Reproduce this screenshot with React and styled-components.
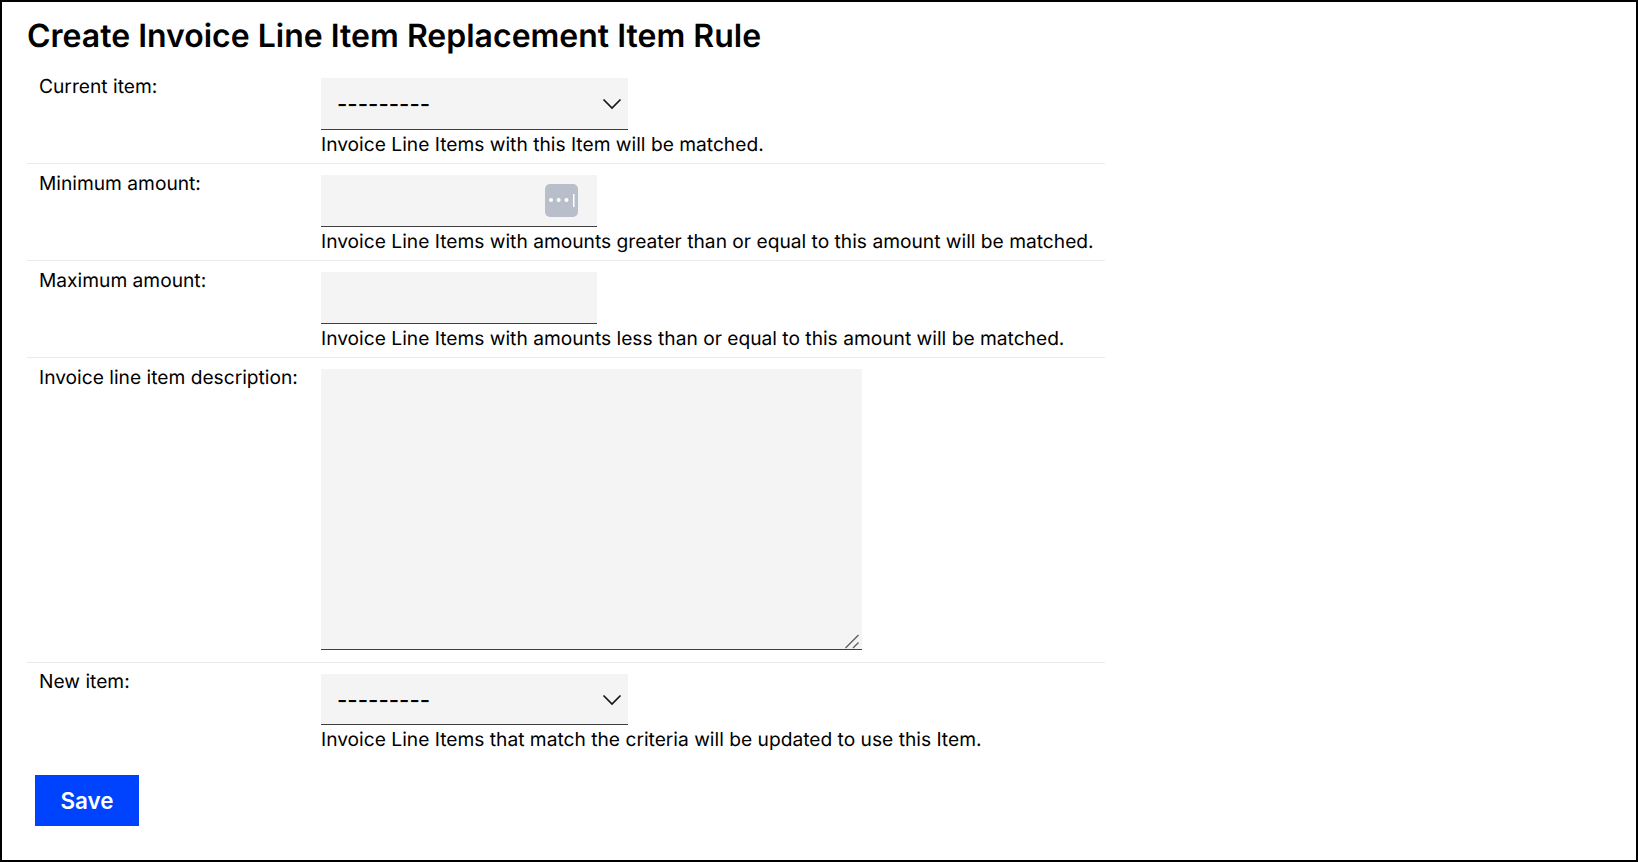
import React from "react";
import styled, { createGlobalStyle } from "styled-components";

const Global = createGlobalStyle`
  html, body { margin: 0; padding: 0; background: #fff; }
  * { box-sizing: border-box; }
`;
const Frame = styled.div`
  width: 1638px;
  height: 862px;
  border: 2px solid #000;
  padding: 13px 25px 0;
  font-family: Inter, "Liberation Sans", sans-serif;
  color: #000;
  overflow: hidden;
  text-rendering: geometricPrecision;
`;
const Title = styled.h1`
  margin: 0 0 10px;
  font-size: 32px;
  line-height: 42px;
  font-weight: 600;
`;
const Form = styled.form`
  width: 1078px;
  display: flex;
  flex-direction: column;
`;
const Row = styled.div`
  display: grid;
  grid-template-columns: 294px 1fr;
  padding: 10.9px 0 3.8px;
  border-bottom: ${(p) => (p.$last ? "none" : "1px solid #ebebeb")};
  &:first-child { padding-bottom: 4.7px; }
`;
const Label = styled.label`
  padding-left: 12px;
  margin-top: ${(p) => p.$nudge || 0}px;
  font-size: 19.2px;
  line-height: 16px;
`;
const Field = styled.div`
  display: flex;
  flex-direction: column;
  align-items: flex-start;
`;
const Control = styled.div`
  position: relative;
  width: ${(p) => p.$w}px;
  margin-bottom: ${(p) => p.$gap || 0}px;
`;
const baseInput = `
  display: block;
  width: 100%;
  background: #f4f4f4;
  border: none;
  border-bottom: 1px solid #3f3f3f;
  border-radius: 0;
  outline: none;
  color: #000;
  font-family: inherit;
  font-size: 19.2px;
`;
const Select = styled.select`
  ${baseInput}
  height: ${(p) => p.$h || 51.9}px;
  padding: 0 16px;
  font-size: 22.4px;
  font-weight: 500;
  appearance: none;
`;
const Input = styled.input`
  ${baseInput}
  height: 51.9px;
  padding: 0 16px;
`;
const Area = styled.textarea`
  ${baseInput}
  height: 281.9px;
  padding: 16px;
  resize: none;
`;
const Chevron = styled.svg`
  position: absolute;
  right: 5px;
  top: 17px;
  pointer-events: none;
`;
const KeyChip = styled.svg`
  position: absolute;
  left: 224px;
  top: 9px;
`;
const Grip = styled.svg`
  position: absolute;
  right: 2px;
  bottom: 1px;
  pointer-events: none;
`;
const Help = styled.div`
  font-size: 19.2px;
  line-height: 29px;
  white-space: nowrap;
`;
const Save = styled.button`
  display: block;
  margin: 16.8px 0 0 8px;
  width: 104px;
  height: 51px;
  border: none;
  background: #0043ff;
  color: #fff;
  font-family: inherit;
  font-size: 22.4px;
  font-weight: 600;
`;

const Arrow = () => (
  <Chevron width="22" height="18" viewBox="0 0 22 18" fill="none">
    <path d="M2.5 4.5 L11 13 L19.5 4.5" stroke="#161616" strokeWidth="1.7" />
  </Chevron>
);
const Chip = () => (
  <KeyChip width="33" height="33" viewBox="0 0 33 33">
    <rect width="33" height="33" rx="5" fill="#b9bfca" />
    <circle cx="6" cy="16" r="2" fill="#fff" />
    <circle cx="13.7" cy="16" r="2" fill="#fff" />
    <circle cx="21.5" cy="16" r="2" fill="#fff" />
    <rect x="28" y="10" width="1.5" height="13" fill="#fff" />
  </KeyChip>
);
const ResizeGrip = () => (
  <Grip width="16" height="16" viewBox="0 0 16 16" fill="none">
    <path d="M1.5 15 L14.5 2 M9 15 L14.5 9.5" stroke="#5f5f5f" strokeWidth="1.4" />
  </Grip>
);

export default function App() {
  return (
    <Frame>
      <Global />
      <Title>Create Invoice Line Item Replacement Item Rule</Title>
      <Form>
        <Row>
          <Label>Current item:</Label>
          <Field>
            <Control $w={307}>
              <Select defaultValue="">
                <option value="">---------</option>
              </Select>
              <Arrow />
            </Control>
            <Help>Invoice Line Items with this Item will be matched.</Help>
          </Field>
        </Row>
        <Row>
          <Label>Minimum amount:</Label>
          <Field>
            <Control $w={276}>
              <Input />
              <Chip />
            </Control>
            <Help>Invoice Line Items with amounts greater than or equal to this amount will be matched.</Help>
          </Field>
        </Row>
        <Row>
          <Label>Maximum amount:</Label>
          <Field>
            <Control $w={276}>
              <Input />
            </Control>
            <Help>Invoice Line Items with amounts less than or equal to this amount will be matched.</Help>
          </Field>
        </Row>
        <Row>
          <Label>Invoice line item description:</Label>
          <Field>
            <Control $w={541} $gap={7.7}>
              <Area />
              <ResizeGrip />
            </Control>
          </Field>
        </Row>
        <Row $last>
          <Label $nudge={-1}>New item:</Label>
          <Field>
            <Control $w={307}>
              <Select defaultValue="" $h={51.5}>
                <option value="">---------</option>
              </Select>
              <Arrow />
            </Control>
            <Help>Invoice Line Items that match the criteria will be updated to use this Item.</Help>
          </Field>
        </Row>
        <div>
          <Save type="button">Save</Save>
        </div>
      </Form>
    </Frame>
  );
}
